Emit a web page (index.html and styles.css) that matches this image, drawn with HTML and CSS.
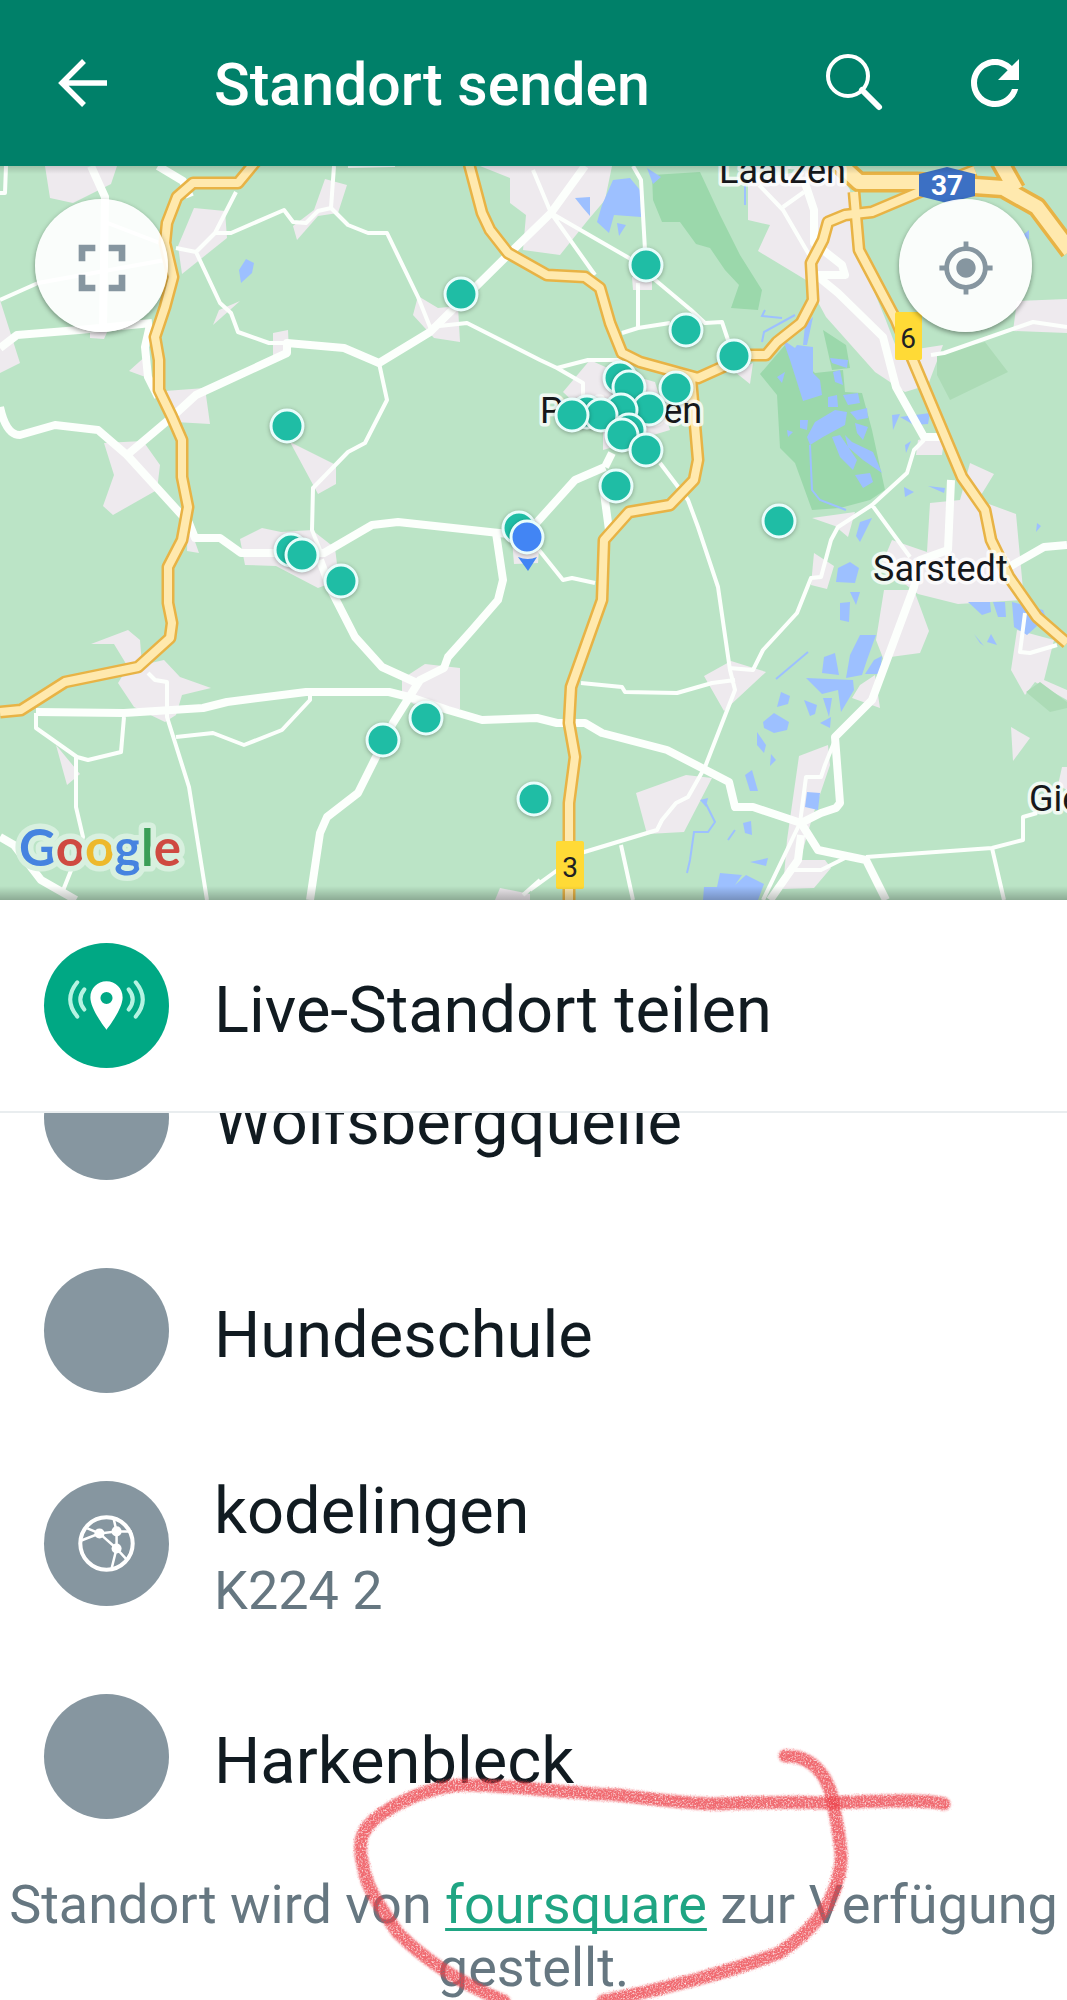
FILE: index.html
```html
<!DOCTYPE html>
<html lang="de">
<head>
    <meta charset="UTF-8" />
    <meta name="viewport" content="width=device-width, initial-scale=1" />
    <title>Standort senden</title>
    <link rel="stylesheet" href="styles.css">
</head>
<body>

<div class="app">
    <header class="toolbar">
        <button class="icon-btn" aria-label="Zurück">
            <svg viewBox="0 0 72 72"><path d="M60 36H16M37 14 15 36l22 22" fill="none" stroke="currentColor" stroke-width="5.500"/></svg>
        </button>
        <h1>Standort senden</h1>
        <button class="icon-btn" aria-label="Suchen">
            <svg viewBox="0 0 72 72"><circle cx="30" cy="29" r="20" fill="none" stroke="currentColor" stroke-width="4"/><path d="M44 43 61 60" fill="none" stroke="currentColor" stroke-width="6" stroke-linecap="round"/></svg>
        </button>
        <button class="icon-btn" aria-label="Aktualisieren">
            <svg viewBox="0 0 24 24"><path fill="currentColor" d="M17.650 6.350C16.200 4.900 14.210 4 12 4c-4.420 0-7.990 3.580-7.990 8s3.570 8 7.990 8c3.730 0 6.840-2.550 7.730-6h-2.080c-.82 2.330-3.040 4-5.650 4-3.310 0-6-2.690-6-6s2.690-6 6-6c1.660 0 3.140.69 4.220 1.780L13 11h7V4l-2.350 2.350z"/></svg>
        </button>
    </header>

    <section class="map" aria-label="Karte">
        <svg class="map-canvas" viewBox="0 166 1067 734">
            <!-- towns -->
            <g class="town">
                <path d="M45 166H117L111 184 73 203 50 198ZM194 208 225 211 227 238 182 274 178 246ZM325 179 347 185 338 213 318 216 297 240 293 226 314 210ZM0 300 20 363 0 373ZM129 371 148 354V378ZM165 391 205 388 210 424 175 422ZM104 443 143 441 160 465 157 490 113 515 103 506 114 475ZM240 301 213 325 219 310ZM273 333 288 330 289 353 273 356ZM418 296 438 308 458 306 460 342 434 338 413 315ZM290 442 336 465V484L318 494ZM480 166H612L605 200 588 220 560 255 523 250 526 215 510 203V178ZM90 330H108L104 339 90 338Z"/>
                <path d="M91 644 128 630 140 640 142 665 164 660 180 677 211 688 182 695 176 715 165 722 134 707 118 683 128 667 114 644ZM240 539 262 528 281 532 312 530 335 548 339 580 318 588 276 566 245 565ZM188 522 199 553 187 551ZM402 679 425 664 460 668V709L424 710 402 697ZM56 745 80 774 67 785ZM512 540 540 535 538 563 514 564ZM500 888 530 894V900H495Z"/>
                <path d="M748 180 835 166 850 190 855 245 885 318 898 352 943 345 928 385 905 392 875 372 826 317 806 280 758 251 770 225 748 220ZM590 360 612 370 655 382 670 430 603 450V430L563 392ZM632 277H652V290H633ZM735 372 753 363 750 384ZM1017 301 1067 299V333L1013 331ZM918 440 945 433 942 455 916 455ZM930 503 960 500 970 463 994 474 978 500 1016 514 1024 600 958 604 918 594 881 566 892 540 927 552ZM812 518 855 512 848 537 835 526ZM884 590 914 590 929 631 920 653 883 658 876 640ZM814 553 834 566 827 589 811 585ZM704 676 731 661 766 672 724 711ZM636 793 686 775 712 778 684 832 647 834ZM799 756 828 745 830 765 813 815 800 860 825 860 831 868 814 888 783 889 787 840ZM1011 727 1030 738 1013 761ZM1017 630 1054 640 1044 680 1067 690V700L1035 682 1025 695 1011 670ZM1062 767H1067V790L1058 785ZM860 685 875 675 880 708 852 698Z"/>
            </g>

            <!-- woods -->
            <path class="wood" d="M652 175 700 172 720 215 740 255 762 290 758 310 731 308 739 285 725 270 710 248 696 244 680 222 662 222 653 200ZM760 374 785 345 815 373 843 370 845 392 862 393 872 430 885 490 870 500 840 508 812 510 795 463 780 448 777 395ZM823 330 846 345 850 368 832 370Z"/>
            <path class="wood faint" d="M937 353 985 342 1008 372 950 400 937 375ZM1026 692 1040 682 1067 702V708L1050 712Z"/>

            <!-- lakes -->
            <g class="water">
                <path d="M783 340 795 348 797 345 813 347 813 373 820 380 822 395 803 401 790 360Z"/>
                <path d="M803 345 805 325 813 317 807 345ZM833 372 840 370 843 385 835 382ZM828 397 837 395 838 407 828 407ZM843 395 858 393 860 403 848 405ZM807 437 815 422 835 410 847 412 845 425 823 437 810 445ZM850 412 867 408 868 418 857 420ZM855 423 868 427 863 440 857 433ZM832 437 840 435 857 460 853 470 840 457ZM845 435 852 442 873 452 882 473 863 460 848 447ZM855 475 870 473 873 482 863 488ZM800 420 808 420 807 430 800 428ZM787 430 793 432 788 437ZM777 377 785 372 782 383ZM830 358 848 360 847 368 832 363Z"/>
                <path d="M246 259 254 263 252 273 241 283 239 270ZM575 198 590 197 590 216 583 208ZM613 180 630 178 640 190 641 217 614 215 609 233 597 222 602 205ZM617 223 626 225 619 236ZM647 168 661 177 653 184ZM892 415 900 414 893 430ZM900 417 930 413 928 424 914 425ZM905 445 911 441 906 453ZM928 486 945 488 944 493ZM904 487 914 492 905 497ZM1023 235 1029 230 1029 240Z"/>
                <path d="M860 522 872 518 860 542 856 536ZM838 568 850 562 859 568 855 583 836 582ZM850 592 860 592 856 605ZM840 603 850 602 849 622 840 620ZM860 635 876 635 867 660 862 675 846 678 850 655ZM824 657 835 653 839 675 822 673ZM874 660 882 656 880 674 865 674ZM806 678 853 680 854 690 841 712 838 690 822 694ZM777 707 781 692 790 696 788 704ZM763 722 774 713 789 722 787 730 774 733 764 728ZM757 732 766 745 764 753 757 745ZM745 775 752 770 758 791 750 791ZM807 792 820 793 818 810 805 807ZM743 823 751 821 752 835 745 833ZM720 873 742 875 735 885 746 875 764 884 758 900H703L704 887 717 887ZM968 602 990 602 991 612 982 615ZM993 602 1005 602 1006 617 998 617ZM1012 602 1043 610 1046 618 1027 635 1014 627ZM974 634 984 646 980 643ZM991 634 997 645 987 642ZM700 800 708 798 706 807ZM804 700 817 705 815 714 810 716ZM823 698 832 698 829 717ZM820 723 831 717 830 728ZM1037 523 1041 526 1036 532ZM750 862 768 858 766 866ZM771 754 776 760 770 766Z"/>
                <path class="stream" d="M706 804 715 822 708 832 694 832 690 860 687 873M776 679 808 652M728 840 735 830M765 310 762 316 782 318M762 342 764 332 795 315M810 445 812 490 820 500 846 510M745 185V205"/>
            </g>

            <!-- side roads -->
            <g class="road">
                <path d="M6 166 5 193H0M0 300 38 283 165 260M105 222 165 245M176 248 196 252 215 233 236 192M215 233H231L284 210 293 222 306 223 318 211 331 208 334 166M331 208 348 225 368 233H387L418 297 430 327 467 323 540 360 557 368 583 383V400M557 368 588 360H622M196 252 220 303 231 313 238 332 269 343H287M379 363 387 400 365 443 348 452 313 488 312 530 320 550M348 166 395 165"/>
                <path d="M633 166 641 180 645 250M551 213 595 275M551 213 629 258 691 310 705 323 722 322 729 343M638 283V327M622 333 638 328 670 323M533 170 551 213M759 185 783 210 811 258M783 207 804 192M931 355 944 353 1033 322 1067 327M660 463 688 500 698 527 718 587 730 670 735 690 705 767 688 797 676 803 662 820 657 830 581 853 530 890M621 845 633 900M581 683 622 687 625 692 677 693 712 683 735 680M539 550 563 580 572 578 595 583"/>
                <path d="M924 440 914 450 907 473 872 505 838 527 831 540 821 577 811 578 797 613 763 650 753 670 729 668M872 505 910 557M835 740 825 765 821 777H806L800 823M787 870H821L845 858M866 857 992 848 1023 840V817L1037 813M992 848 1004 900M1025 613 1020 652 1030 653 1057 645M800 823 763 900"/>
                <path d="M36 713V728L77 757 88 760 121 752 124 717M76 757V807L83 837 72 868 62 893M148 673 155 680 167 682V717L189 787 207 900M176 737 213 733 244 745 282 730 310 700V692M523 895 540 880"/>
            </g>

            <!-- main roads -->
            <g class="road wide">
                <path d="M91 166 105 197 103 327M0 348 17 335 79 330 152 323M158 166 183 181 190 197M150 325 145 347 148 377 158 397M0 407Q6 435 20 435L55 425 98 430 127 455 189 523 195 538H220L241 553H324L372 525 398 522 499 533 525 536M127 455 172 417 196 395 287 353V343L344 348 379 363 430 332 510 253 551 213 585 166M605 467 575 480 530 530M612 453 605 467M604 493 609 530"/>
                <path d="M804 180 814 210V243L842 265 845 275H816L838 293 883 337 896 387 924 437H941M36 712 124 713 203 708 227 702 306 692H389L413 698 448 710 482 720 537 718 557 723H585L602 733 667 750 729 782 735 807H753L801 823 818 850 866 860 886 900M801 823 821 813 836 808 840 803 835 737 872 700 914 587 920 560 948 550 951 480M801 835 798 860 770 900M1009 567 1044 547 1067 545"/>
                <path d="M320 560 331 590 355 637 382 667 417 683M496 533 503 580 498 600 472 630 448 657 444 668 420 680 393 723 358 793 327 817 320 833 310 900M0 837 14 845 41 880 76 900"/>
            </g>

            <!-- federal roads: casing first, then the fill on top -->
            <g class="highway-edge">
                <path d="M257 160 238 183H193L177 197 167 223 165 243 173 277 165 307 155 337 159 360V390L172 417 182 440V477L188 507 182 540 168 567V603L172 623 170 638 138 667 65 682 21 710 0 712"/>
                <path d="M468 160 482 213 490 230 508 253 547 275 585 277 600 288 610 323 622 353 640 362 698 378 749 355H766L777 342 801 323 813 300 811 263 823 240 828 222 845 215 872 212 917 193 975 170M691 378 698 460 694 480 670 505 629 512 604 540 602 600 571 687 569 723 575 757 569 803V900"/>
                <path d="M854 192 859 250 896 320 962 477 985 510 991 540 1009 577 1037 617 1067 643"/>
                <path class="motorway" d="M835 160 859 182H917L1003 188 1037 207 1070 251M999 160 1016 190"/>
            </g>
            <g class="highway">
                <path d="M257 160 238 183H193L177 197 167 223 165 243 173 277 165 307 155 337 159 360V390L172 417 182 440V477L188 507 182 540 168 567V603L172 623 170 638 138 667 65 682 21 710 0 712"/>
                <path d="M468 160 482 213 490 230 508 253 547 275 585 277 600 288 610 323 622 353 640 362 698 378 749 355H766L777 342 801 323 813 300 811 263 823 240 828 222 845 215 872 212 917 193 975 170M691 378 698 460 694 480 670 505 629 512 604 540 602 600 571 687 569 723 575 757 569 803V900"/>
                <path d="M854 192 859 250 896 320 962 477 985 510 991 540 1009 577 1037 617 1067 643"/>
                <path class="motorway" d="M835 160 859 182H917L1003 188 1037 207 1070 251M999 160 1016 190"/>
            </g>

            <!-- road numbers -->
            <path class="shield-blue" d="M947 167 975 174V196L947 203 919 196V174Z"/>
            <text class="road-no motorway-no" x="947" y="195">37</text>
            <rect class="shield-yellow" x="895" y="312" width="27" height="48" rx="2"/>
            <text class="road-no" x="908" y="348">6</text>
            <rect class="shield-yellow" x="556" y="841" width="28" height="48" rx="2"/>
            <text class="road-no" x="570" y="877">3</text>

            <text class="place" x="719" y="183">Laatzen</text>
            <text class="place" x="540" y="423">Pattensen</text>
            <text class="place" x="873" y="581">Sarstedt</text>
            <text class="place" x="1029" y="811">Giesen</text>

            <text class="google" x="19" y="866"><tspan class="g-blue">G</tspan><tspan class="g-red">o</tspan><tspan class="g-yellow">o</tspan><tspan class="g-blue">g</tspan><tspan class="g-green">l</tspan><tspan class="g-red">e</tspan></text>

            <!-- places nearby -->
            <g class="marker">
                <circle cx="461" cy="294" r="16"/>
                <circle cx="646" cy="265" r="16"/>
                <circle cx="686" cy="330" r="16"/>
                <circle cx="734" cy="356" r="16"/>
                <circle cx="620" cy="378" r="16"/>
                <circle cx="629" cy="387" r="16"/>
                <circle cx="676" cy="388" r="16"/>
                <circle cx="649" cy="409" r="16"/>
                <circle cx="621" cy="410" r="16"/>
                <circle cx="587" cy="412" r="16"/>
                <circle cx="601" cy="415" r="16"/>
                <circle cx="572" cy="415" r="16"/>
                <circle cx="629" cy="430" r="16"/>
                <circle cx="622" cy="435" r="16"/>
                <circle cx="646" cy="450" r="16"/>
                <circle cx="616" cy="486" r="16"/>
                <circle cx="779" cy="521" r="16"/>
                <circle cx="287" cy="426" r="16"/>
                <circle cx="291" cy="550" r="16"/>
                <circle cx="302" cy="555" r="16"/>
                <circle cx="341" cy="581" r="16"/>
                <circle cx="426" cy="718" r="16"/>
                <circle cx="383" cy="740" r="16"/>
                <circle cx="534" cy="799" r="16"/>
                <circle cx="519" cy="528" r="16"/>
                <circle class="me" cx="527" cy="537" r="16"/>
            </g>
            <path class="me-arrow" d="M518 557Q528 561 537 557L528 571Z"/>
        </svg>

        <div class="map-controls">
            <button class="map-btn" aria-label="Vollbild">
                <svg width="80" height="80" viewBox="0 0 24 24"><path fill="currentColor" d="M7 14H5v5h5v-2H7v-3zm-2-4h2V7h3V5H5v5zm12 7h-3v2h5v-5h-2v3zM14 5v2h3v3h2V5h-5z"/></svg>
            </button>
            <button class="map-btn" aria-label="Mein Standort">
                <svg width="58" height="58" viewBox="0 0 24 24"><path fill="currentColor" d="M12 8c-2.210 0-4 1.790-4 4s1.790 4 4 4 4-1.790 4-4-1.790-4-4-4zm8.940 3c-.46-4.170-3.770-7.480-7.940-7.940V1h-2v2.060C6.830 3.520 3.520 6.830 3.060 11H1v2h2.060c.46 4.170 3.770 7.480 7.940 7.940V23h2v-2.060c4.170-.46 7.480-3.770 7.940-7.940H23v-2h-2.060zM12 19c-3.870 0-7-3.130-7-7s3.130-7 7-7 7 3.130 7 7-3.130 7-7 7z"/></svg>
            </button>
        </div>
    </section>

    <button class="row live">
        <svg class="avatar" viewBox="0 0 124 124">
            <path fill="#fff" fill-rule="evenodd" d="M62 38c-9 0-16 7-16 16 0 12 16 32 16 32s16-20 16-32c0-9-7-16-16-16zm0 10.500a6 6 0 1 1 0 12 6 6 0 0 1 0-12z"/>
            <path class="waves" d="M40 46q-8 10 0 20M33 39q-14 17 0 34M84 46q8 10 0 20M91 39q14 17 0 34"/>
        </svg>
        <span class="row-text"><span class="name">Live-Standort teilen</span></span>
    </button>

    <main class="places">
        <button class="row">
            <span class="avatar"></span>
            <span class="row-text"><span class="name">Wolfsbergquelle</span></span>
        </button>
        <button class="row">
            <span class="avatar"></span>
            <span class="row-text"><span class="name">Hundeschule</span></span>
        </button>
        <button class="row">
            <svg class="avatar" viewBox="0 0 124 124">
                <g fill="none" stroke="#fff">
                    <circle cx="62" cy="62" r="26" stroke-width="4"/>
                    <path d="M37 59 55 52 43 47M55 52 72 50 69 37M72 50H87M55 52 72 67M72 50V67L83 79M72 67 67 87" stroke-width="2.500"/>
                </g>
                <g fill="#fff"><circle cx="55" cy="52" r="5"/><circle cx="72" cy="50" r="5"/><circle cx="72" cy="67" r="5"/></g>
            </svg>
            <span class="row-text"><span class="name">kodelingen</span><span class="address">K224 2</span></span>
        </button>
        <button class="row">
            <span class="avatar"></span>
            <span class="row-text"><span class="name">Harkenbleck</span></span>
        </button>
        <p class="credit">Standort wird von <a href="#">foursquare</a> zur Verfügung gestellt.</p>
    </main>

    <!-- hand-drawn mark round the link -->
    <svg class="scribble" viewBox="0 1740 1067 260" aria-hidden="true">
        <filter id="crayon" x="-5%" y="-5%" width="110%" height="110%">
            <feTurbulence type="fractalNoise" baseFrequency="0.600" numOctaves="2" seed="4" result="noise"/>
            <feGaussianBlur in="SourceGraphic" stdDeviation="1" result="soft"/>
            <feDisplacementMap in="soft" in2="noise" scale="3" result="rough"/>
            <feColorMatrix in="noise" type="matrix" values="0 0 0 0 0  0 0 0 0 0  0 0 0 0 0  2 0 0 0 -0.100" result="grain"/>
            <feComposite in="rough" in2="grain" operator="in"/>
        </filter>
        <path filter="url(#crayon)" d="M785 1756C812 1755 827 1775 833 1800C836 1825 842 1840 841 1862C837 1900 815 1930 779 1953C730 1972 660 1990 603 2001"/>
        <path filter="url(#crayon)" d="M504 2001C452 1980 420 1955 398 1933C375 1900 366 1885 363 1865C355 1835 365 1822 398 1804C425 1790 445 1785 466 1785C510 1785 560 1793 618 1795C660 1800 690 1804 716 1804C750 1803 780 1801 828 1803C860 1802 925 1798 944 1804"/>
    </svg>
</div>

</body>
</html>
```

FILE: styles.css
```css
* {
    box-sizing: border-box;
}
body {
    margin: 0;
    font-family: Roboto, sans-serif;
    color: #111b21;
    background: #fff;
}
button {
    border: none;
    padding: 0;
    background: none;
    color: inherit;
    font: inherit;
    cursor: pointer;
}
.app {
    position: relative;
    display: flex;
    flex-direction: column;
    height: 100vh;
    overflow: hidden;
}

/* top bar */
.toolbar {
    display: flex;
    align-items: center;
    flex-shrink: 0;
    gap: 69px;
    height: 166px;
    padding: 0 36px 0 47px;
    background: #008069;
    color: #fff;
}
.toolbar h1 {
    flex: 1;
    margin: 0 0 0 26px;
    padding-top: 4px;
    font-size: 59px;
    font-weight: 500;
    line-height: 72px;
    white-space: nowrap;
}
.icon-btn {
    width: 72px;
    height: 72px;
}
.icon-btn svg {
    display: block;
}

/* map */
.map {
    position: relative;
    flex-shrink: 0;
    background: #bbe4c6;
}
.map::after {
    content: "";
    position: absolute;
    inset: 0;
    background: linear-gradient(rgba(0, 0, 0, 0.15), transparent 8px), linear-gradient(to top, rgba(0, 0, 0, 0.25), transparent 14px);
    pointer-events: none;
}
.map-canvas {
    display: block;
    width: 100%;
    overflow: hidden;
}
.town {
    fill: #eeeaee;
}
.wood {
    fill: #9bd8ab;
}
.wood.faint {
    fill: #acdbb6;
}
.water {
    fill: #9dc0ff;
}
.stream {
    fill: none;
    stroke: #9dc0ff;
    stroke-width: 2;
}
.road, .highway, .highway-edge {
    fill: none;
    stroke-linejoin: round;
}
.road {
    stroke: #fcfffc;
    stroke-width: 4;
}
.road.wide {
    stroke-width: 8;
}
.highway-edge {
    stroke: #e8b345;
    stroke-width: 13;
}
.highway {
    stroke: #ffe9ae;
    stroke-width: 8;
}
.highway-edge .motorway {
    stroke-width: 21;
}
.highway .motorway {
    stroke-width: 14;
}
.shield-blue {
    fill: #3c70c4;
}
.shield-yellow {
    fill: #ffda36;
}
.road-no {
    font-size: 28px;
    text-anchor: middle;
    fill: #202124;
}
.motorway-no {
    font-weight: 700;
    fill: #fff;
}
.place {
    font-size: 36px;
    fill: #16181b;
    stroke: rgba(255, 255, 255, 0.8);
    stroke-width: 7;
    stroke-linejoin: round;
    paint-order: stroke;
}
.google {
    font-family: Lato, sans-serif;
    font-size: 51px;
    font-weight: 700;
    stroke: #d8f0df;
    stroke-width: 11;
    stroke-linejoin: round;
    paint-order: stroke;
}
.g-blue {
    fill: #4683e0;
}
.g-red {
    fill: #cf4a41;
}
.g-yellow {
    fill: #edb92c;
}
.g-green {
    fill: #3b9e57;
}
.marker {
    fill: #1fbda5;
    stroke: #e9fdfb;
    stroke-width: 3;
}
.marker circle {
    filter: drop-shadow(0 1px 2px rgba(0, 0, 0, 0.3));
}
.me, .me-arrow {
    fill: #4285f4;
}
.map-controls {
    position: absolute;
    top: 33px;
    left: 35px;
    right: 35px;
    display: flex;
    justify-content: space-between;
}
.map-btn {
    display: flex;
    align-items: center;
    justify-content: center;
    width: 133px;
    height: 133px;
    padding-top: 4px;
    border-radius: 50%;
    background: rgba(255, 255, 255, 0.92);
    color: #8696a0;
    box-shadow: 0 2px 5px rgba(0, 0, 0, 0.4);
}

/* place rows */
.row {
    display: flex;
    align-items: center;
    flex-shrink: 0;
    gap: 45px;
    width: 100%;
    height: 213px;
    padding: 0 44px;
    text-align: left;
}
.live {
    border-bottom: 2px solid #e9edef;
}
.avatar {
    flex-shrink: 0;
    width: 125px;
    height: 125px;
    border-radius: 50%;
    background: #8696a0;
}
.live .avatar {
    background: #00a884;
}
.waves {
    fill: none;
    stroke: #b5f3e2;
    stroke-width: 4;
    stroke-linecap: round;
}
.row-text {
    display: flex;
    flex-direction: column;
    gap: 10px;
    padding-top: 9px;
}
.name {
    font-size: 65px;
    line-height: 76px;
}
.address {
    font-size: 54px;
    line-height: 64px;
    color: #667781;
}
.places {
    display: flex;
    flex: 1;
    flex-direction: column;
    justify-content: flex-end;
    min-height: 0;
    overflow: hidden;
}
.credit {
    margin: 0;
    padding: 10px 0 1px;
    font-size: 54px;
    line-height: 63px;
    text-align: center;
    color: #667781;
}
.credit a {
    color: #1fa583;
    text-decoration-thickness: 3px;
    text-underline-offset: 5px;
    text-decoration-skip-ink: none;
}
.scribble {
    position: absolute;
    left: 0;
    bottom: 0;
    width: 100%;
    pointer-events: none;
}
.scribble path {
    fill: none;
    stroke: rgba(236, 70, 78, 0.8);
    stroke-width: 13;
    stroke-linecap: round;
}
```
